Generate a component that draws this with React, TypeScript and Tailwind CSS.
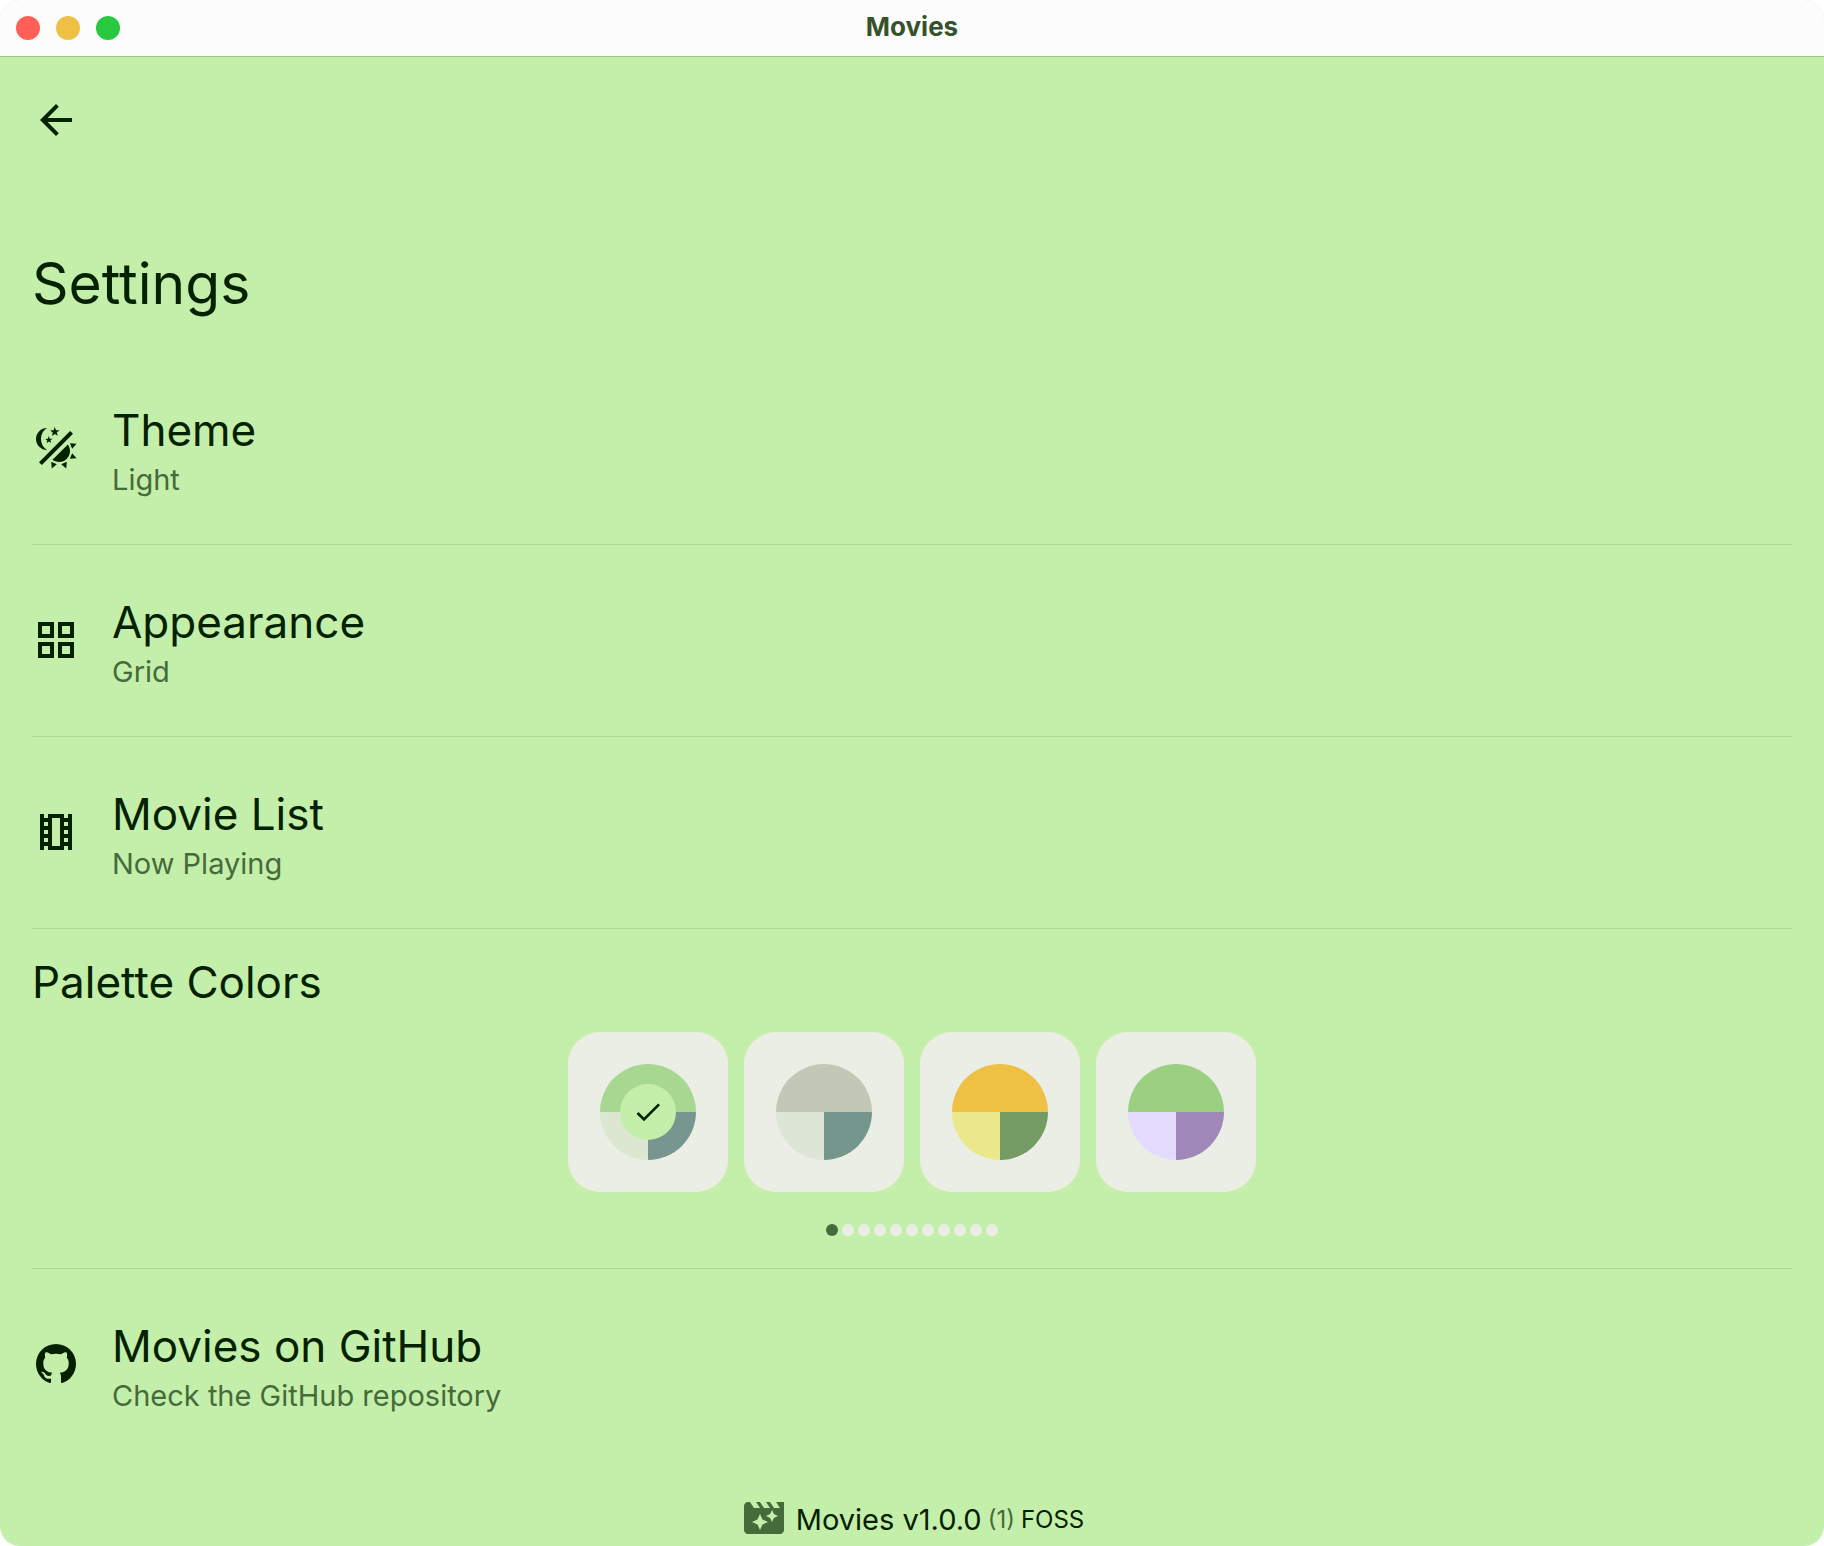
import type { ReactNode } from "react";

const icons = {
  back: "M20 11H7.83l5.59-5.59L12 4l-8 8 8 8 1.41-1.41L7.83 13H20v-2z",
  theme:
    "M7.5,2C5.71,3.15 4.5,5.18 4.5,7.5C4.5,9.82 5.71,11.85 7.53,13C4.46,13 2,10.54 2,7.5A5.5,5.5 0 0,1 7.5,2M19.07,3.5L20.5,4.93L4.93,20.5L3.5,19.07L19.07,3.5M12.89,5.93L11.41,5L9.97,6L10.39,4.3L9,3.24L10.75,3.12L11.33,1.47L12,3.1L13.73,3.13L12.38,4.26L12.89,5.93M9.59,9.54L8.43,8.81L7.31,9.59L7.65,8.27L6.56,7.44L7.92,7.35L8.37,6.06L8.88,7.33L10.24,7.36L9.19,8.23L9.59,9.54M19,13.5A5.5,5.5 0 0,1 13.5,19C12.28,19 11.15,18.6 10.24,17.93L17.93,10.24C18.6,11.15 19,12.28 19,13.5M14.6,20.08L17.37,18.93L17.13,22.28L14.6,20.08M18.93,17.38L20.08,14.61L22.28,17.15L18.93,17.38M20.08,12.42L18.94,9.64L22.28,9.88L20.08,12.42M9.63,18.93L12.4,20.08L9.87,22.27L9.63,18.93Z",
  grid: "M3 3v8h8V3H3zm6 6H5V5h4v4zm-6 4v8h8v-8H3zm6 6H5v-4h4v4zm4-16v8h8V3h-8zm6 6h-4V5h4v4zm-6 4v8h8v-8h-8zm6 6h-4v-4h4v4z",
  film: "M18 3v2h-2V3H8v2H6V3H4v18h2v-2h2v2h8v-2h2v2h2V3h-2zM8 17H6v-2h2v2zm0-4H6v-2h2v2zm0-4H6V7h2v2zm6 10h-4V5h4v14zm4-2h-2v-2h2v2zm0-4h-2v-2h2v2zm0-4h-2V7h2v2z",
  github:
    "M12,2A10,10 0 0,0 2,12C2,16.42 4.87,20.17 8.84,21.5C9.34,21.58 9.5,21.27 9.5,21C9.5,20.77 9.5,20.14 9.5,19.31C6.73,19.91 6.14,17.97 6.14,17.97C5.68,16.81 5.03,16.5 5.03,16.5C4.12,15.88 5.1,15.9 5.1,15.9C6.1,15.97 6.63,16.93 6.63,16.93C7.5,18.45 8.97,18 9.54,17.76C9.63,17.11 9.89,16.67 10.17,16.42C7.95,16.17 5.62,15.31 5.62,11.5C5.62,10.39 6,9.5 6.65,8.79C6.55,8.54 6.2,7.5 6.75,6.15C6.75,6.15 7.59,5.88 9.5,7.17C10.29,6.95 11.15,6.84 12,6.84C12.85,6.84 13.71,6.95 14.5,7.17C16.41,5.88 17.25,6.15 17.25,6.15C17.8,7.5 17.45,8.54 17.35,8.79C18,9.5 18.38,10.39 18.38,11.5C18.38,15.32 16.04,16.16 13.81,16.41C14.17,16.72 14.5,17.33 14.5,18.26C14.5,19.6 14.5,20.68 14.5,21C14.5,21.27 14.66,21.59 15.17,21.5C19.14,20.16 22,16.42 22,12A10,10 0 0,0 12,2Z",
  check: "M9 16.17L4.83 12l-1.42 1.41L9 19 21 7l-1.41-1.41z",
  clapper:
    "M18 4l2 3h-3l-2-3h-2l2 3h-3l-2-3H8l2 3H7L5 4H4c-1.1 0-1.99.9-1.99 2L2 18c0 1.1.9 2 2 2h16c1.1 0 2-.9 2-2V4h-4zm-6.75 11.25L10 18l-1.25-2.75L6 14l2.75-1.25L10 10l1.25 2.75L14 14l-2.75 1.25zm5.69-3.31L16 14l-.94-2.06L13 11l2.06-.94L16 8l.94 2.06L19 11l-2.06.94z",
};

function Icon({ name, className = "size-12" }: { name: keyof typeof icons; className?: string }) {
  return (
    <svg viewBox="0 0 24 24" fill="currentColor" aria-hidden="true" className={`shrink-0 ${className}`}>
      <path d={icons[name]} />
    </svg>
  );
}

const rowClass = "flex h-[191px] w-full items-center gap-8 pb-0.5 text-left";

function RowContent({ icon, title, detail }: { icon: keyof typeof icons; title: string; detail: string }) {
  return (
    <>
      <Icon name={icon} />
      <span className="flex flex-col gap-0.5 pt-1.5">
        <span className="text-[44px] leading-14">{title}</span>
        <span className="text-[29px] leading-10 text-[#466b3a]">{detail}</span>
      </span>
    </>
  );
}

function Divided({ children }: { children: ReactNode }) {
  return <div className="border-b border-[#a9d893]">{children}</div>;
}

const palettes = [
  { name: "Dynamic", top: "#a8d792", left: "#dbe7d0", right: "#789690" },
  { name: "Gray", top: "#c1c9b6", left: "#dde5d6", right: "#75968c" },
  { name: "Amber", top: "#eec044", left: "#ebe78b", right: "#739b63" },
  { name: "Green", top: "#9bd082", left: "#e4dcfe", right: "#9f87b9" },
];

export default function App() {
  return (
    <div className="min-h-screen bg-white">
      <div className="flex min-h-screen flex-col overflow-hidden rounded-[20px] bg-[#c4efaa] font-['Inter',sans-serif] text-[#042100]">
        <header className="grid h-[57px] grid-cols-3 items-center border-b border-[#98c981] bg-[#fcfcfc] px-4">
          <div className="flex gap-4">
            <button aria-label="Close" className="size-6 rounded-full bg-[#ff5f57]" />
            <button aria-label="Minimize" className="size-6 rounded-full bg-[#eec044]" />
            <button aria-label="Zoom" className="size-6 rounded-full bg-[#28c840]" />
          </div>
          <div className="pb-0.5 text-center text-[26px] leading-8 font-bold text-[#35522b]">Movies</div>
        </header>

        <main className="flex grow flex-col px-8">
          <nav className="flex h-[126px] items-center">
            <button aria-label="Back" className="size-12">
              <Icon name="back" />
            </button>
          </nav>
          <h1 className="mt-[69px] mb-[37px] text-[57px] leading-16">Settings</h1>
          <div>
            <Divided>
              <button className={rowClass}>
                <RowContent icon="theme" title="Theme" detail="Light" />
              </button>
            </Divided>
            <Divided>
              <button className={rowClass}>
                <RowContent icon="grid" title="Appearance" detail="Grid" />
              </button>
            </Divided>
            <Divided>
              <button className={rowClass}>
                <RowContent icon="film" title="Movie List" detail="Now Playing" />
              </button>
            </Divided>
            <Divided>
              <section className="flex flex-col pt-[25px] pb-8">
                <h2 className="text-[44px] leading-14">Palette Colors</h2>
                <div className="mt-[22px] flex justify-center gap-4">
                  {palettes.map((p, i) => (
                    <button
                      key={p.name}
                      aria-label={p.name}
                      aria-pressed={i === 0}
                      className="grid size-40 place-items-center rounded-4xl bg-[#ebeee5]"
                    >
                      <span
                        className="grid size-24 place-items-center rounded-full"
                        style={{
                          background: `conic-gradient(${p.top} 90deg, ${p.right} 90deg 180deg, ${p.left} 180deg 270deg, ${p.top} 270deg)`,
                        }}
                      >
                        {i === 0 && (
                          <span className="grid size-14 place-items-center rounded-full bg-[#c4efaa]">
                            <Icon name="check" className="size-8" />
                          </span>
                        )}
                      </span>
                    </button>
                  ))}
                </div>
                <div className="mt-8 flex justify-center gap-1">
                  {Array.from({ length: 11 }, (_, i) => (
                    <span
                      key={i}
                      className={`size-3 rounded-full ${i === 0 ? "bg-[#466b3a]" : "bg-[#ebeee5]"}`}
                    />
                  ))}
                </div>
              </section>
            </Divided>
            <a href="#github" className={rowClass}>
              <RowContent icon="github" title="Movies on GitHub" detail="Check the GitHub repository" />
            </a>
          </div>
          <footer className="mt-auto flex items-center justify-center gap-2 pb-1">
            <span className="text-[#466b3a]">
              <Icon name="clapper" />
            </span>
            <p className="flex items-center gap-1.5 pt-1">
              <span className="text-[29px] leading-10">Movies v1.0.0</span>
              <span className="text-[24px] leading-8 text-[#466b3a]">(1)</span>
              <span className="text-[24px] leading-8">FOSS</span>
            </p>
          </footer>
        </main>
      </div>
    </div>
  );
}
